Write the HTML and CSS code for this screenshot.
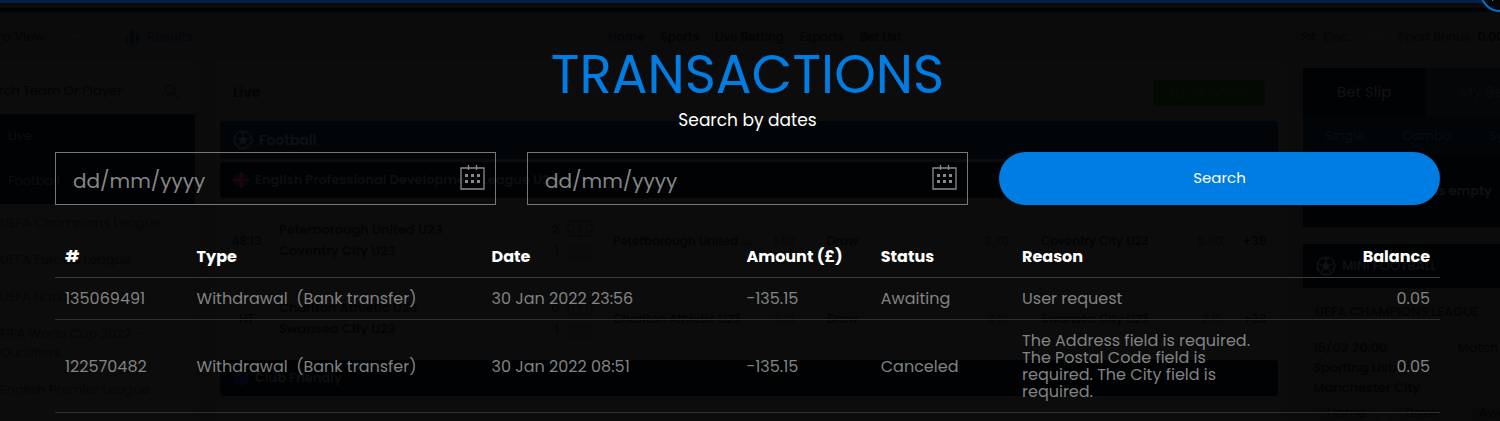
FILE: index.html
```
<!DOCTYPE html>
<html lang="en">
<head>
<meta charset="utf-8">
<meta name="viewport" content="width=device-width, initial-scale=1">
<title>Transactions</title>
<link rel="stylesheet" href="styles.css">
</head>
<body>

<svg class="defs" aria-hidden="true">
  <symbol id="ball" viewBox="0 0 20 20">
    <circle cx="10" cy="10" r="9" fill="none" stroke="currentColor" stroke-width="1.4"/>
    <path d="M10 6l4 3-1.500 4.500h-5L6 9z" fill="currentColor"/>
    <path d="M10 6V2M14 9l4-1.500M12.500 13.500l2.500 3M7.500 13.500l-2.500 3M6 9L2 7.500M7 2l3 1.500L13 2M1 11l2 2-.5 2M19 11l-2 2 .5 2M8 18.500l2-1 2 1" fill="none" stroke="currentColor" stroke-width="1.200"/>
  </symbol>
  <symbol id="calendar" viewBox="0 0 25 25">
    <path d="M1 3h23v21H1z" fill="none" stroke="currentColor" stroke-width="1.300"/>
    <path d="M8.500 0v5M16.500 0v5" stroke="currentColor" stroke-width="1.300"/>
    <path d="M5 9h3v3H5zM11 9h3v3h-3zM17 9h3v3h-3zM5 15h3v3H5zM11 15h3v3h-3zM17 15h3v3h-3z" fill="currentColor"/>
  </symbol>
  <symbol id="pitch" viewBox="0 0 26 41">
    <path d="M1 1h24v15H1zM13 1v15M1 5h5v7H1M25 5h-5v7h5" fill="none" stroke="currentColor"/>
    <circle cx="13" cy="8.500" r="2.500" fill="none" stroke="currentColor"/>
    <path d="M1 26h24v14H1z" fill="#0a0a0a"/>
  </symbol>
</svg>

<div class="page">

  <!-- sportsbook, dimmed behind the dialog -->
  <div class="site" aria-hidden="true">
    <div class="site-top"></div>
    <div class="site-header">
      <div class="header-left">
        <span class="view">Pro View</span>
        <svg class="arrow" width="10" height="7" viewBox="0 0 10 7"><path d="M1 1l4 4 4-4" fill="none" stroke="currentColor" stroke-width="1.500"/></svg>
        <span class="results">
          <svg width="14" height="14" viewBox="0 0 14 14"><path d="M0 6h3v8H0zM5 0h4v14H5zM11 5h3v9h-3z" fill="currentColor"/></svg>
          Results
        </span>
      </div>
      <div class="header-nav">
        <span class="current">Home</span>
        <span>Sports</span>
        <span>Live Betting</span>
        <span>Esports</span>
        <span>Bet List</span>
      </div>
      <div class="header-right">
        <svg width="16" height="12" viewBox="0 0 16 12"><path d="M1 10l5-5 4 4 5-7M1 5l4-3 6 3 4 5" fill="none" stroke="currentColor" stroke-width="1.500"/></svg>
        <span>Dec...</span>
        <svg class="arrow chevron" width="10" height="7" viewBox="0 0 10 7"><path d="M1 1l4 4 4-4" fill="none" stroke="currentColor" stroke-width="1.500"/></svg>
        <span>Sport Bonus</span>
        <b>0.00</b>
      </div>
    </div>

    <div class="site-body">
      <div class="sidebar">
        <div class="team-search">
          <span>Search Team Or Player</span>
          <svg width="15" height="15" viewBox="0 0 15 15"><circle cx="6" cy="6" r="4.500" fill="none" stroke="currentColor" stroke-width="1.500"/><path d="M9 9l5 5" stroke="currentColor" stroke-width="1.500"/></svg>
        </div>
        <div class="side-tabs">
          <span>Live</span>
          <span>Football</span>
        </div>
        <div class="leagues">
          <span>UEFA Champions League</span>
          <span>UEFA Europa League</span>
          <span>UEFA Nations League</span>
          <span>FIFA World Cup 2022 - Qualifiers</span>
          <span>English Premier League</span>
        </div>
      </div>

      <div class="events">
        <div class="events-head"><b>Live</b><span class="all">ALL 63 EVENTS</span></div>
        <div class="sport"><svg width="20" height="20"><use href="#ball"/></svg>Football</div>
        <div class="league">
          <svg width="16" height="16" viewBox="0 0 16 16"><circle cx="8" cy="8" r="8" fill="#05070d"/><path d="M3 3l10 10M13 3L3 13" stroke="#120609"/><path d="M8 0v16M0 8h16" stroke="#200508" stroke-width="2"/></svg>
          English Professional Development League U23
        </div>
        <div class="match">
          <span class="time">48:13</span>
          <span class="teams">Peterborough United U23<br>Coventry City U23</span>
          <span class="score">2<br>1</span>
          <svg width="26" height="41"><use href="#pitch"/></svg>
          <span class="odd"><b>Peterborough United ...</b><i>1.52</i></span>
          <span class="odd"><b>Draw</b><i>3.70</i></span>
          <span class="odd"><b>Coventry City U23</b><i>5.50</i></span>
          <b class="more">+38</b>
        </div>
        <div class="match">
          <span class="time">HT</span>
          <span class="teams">Charlton Athletic U23<br>Swansea City U23</span>
          <span class="score">0<br>1</span>
          <svg width="26" height="41"><use href="#pitch"/></svg>
          <span class="odd"><b>Charlton Athletic U23</b><i>3.10</i></span>
          <span class="odd"><b>Draw</b><i>3.10</i></span>
          <span class="odd"><b>Swansea City U23</b><i>2.15</i></span>
          <b class="more">+38</b>
        </div>
        <div class="league">
          <svg width="16" height="16" viewBox="0 0 16 16"><circle cx="8" cy="8" r="8" fill="#03060f"/></svg>
          Club Friendly
        </div>
      </div>

      <div class="betslip">
        <div class="slip-tabs"><span class="active">Bet Slip</span><span>My Bets</span></div>
        <div class="slip-types"><span>Single</span><span>Combo</span><span>System</span></div>
        <div class="slip-empty">Your bet slip is empty</div>
        <div class="mini-head"><svg width="20" height="20"><use href="#ball"/></svg>MINI FOOTBALL</div>
        <div class="mini-league">UEFA CHAMPIONS LEAGUE</div>
        <div class="mini-match">
          <div class="mini-when"><b>15/02 20:00</b><span>Match Result</span></div>
          <b>Sporting Lisboa vs</b>
          <b>Manchester City</b>
          <div class="mini-odds"><span>Home</span><span>Draw</span><span>Away</span></div>
        </div>
      </div>
    </div>
  </div>

  <main class="dialog">
    <button type="button" class="close" aria-label="Close">
      <svg width="20" height="20" viewBox="0 0 20 20"><path d="M2 2l16 16M18 2L2 18" stroke="currentColor" stroke-width="2"/></svg>
    </button>
    <h1>TRANSACTIONS</h1>
    <p class="subtitle">Search by dates</p>

    <form class="search">
      <div class="date">
        <input type="text" name="from" aria-label="From date" placeholder="dd/mm/yyyy">
        <svg class="icon" width="25" height="25"><use href="#calendar"/></svg>
      </div>
      <div class="date">
        <input type="text" name="to" aria-label="To date" placeholder="dd/mm/yyyy">
        <svg class="icon" width="25" height="25"><use href="#calendar"/></svg>
      </div>
      <button type="submit">Search</button>
    </form>

    <table class="transactions">
      <thead>
        <tr>
          <th class="c-id">#</th>
          <th class="c-type">Type</th>
          <th class="c-date">Date</th>
          <th class="c-amount">Amount (£)</th>
          <th class="c-status">Status</th>
          <th class="c-reason">Reason</th>
          <th class="c-balance">Balance</th>
        </tr>
      </thead>
      <tbody>
        <tr>
          <td>135069491</td>
          <td>Withdrawal &nbsp;(Bank transfer)</td>
          <td>30 Jan 2022 23:56</td>
          <td>-135.15</td>
          <td>Awaiting</td>
          <td>User request</td>
          <td class="c-balance">0.05</td>
        </tr>
        <tr>
          <td>122570482</td>
          <td>Withdrawal &nbsp;(Bank transfer)</td>
          <td>30 Jan 2022 08:51</td>
          <td>-135.15</td>
          <td>Canceled</td>
          <td>The Address field is required. The Postal Code field is required. The City field is required.</td>
          <td class="c-balance">0.05</td>
        </tr>
      </tbody>
    </table>
  </main>

</div>

</body>
</html>
```
FILE: styles.css
```
* { box-sizing: border-box; }
body {
  margin: 0;
  background: #0c0c0c;
  color: #fff;
  font-family: Poppins, Inter, "Open Sans", sans-serif;
  font-size: 16px;
}
.defs { display: none; }
.page {
  position: relative;
  min-height: 100vh;
  overflow: hidden;
  border-bottom: 1px solid #020202;
}

/* dialog */
.dialog {
  position: relative;
  padding: 45px 60px 8px 55px;
}
h1 {
  margin: 0;
  color: #007de3;
  font-size: 53px;
  line-height: 60px;
  font-weight: 400;
  text-align: center;
}
.subtitle {
  margin: 0;
  padding: 3px 0 20px;
  font-size: 17px;
  line-height: 24px;
  text-align: center;
}
.close {
  position: absolute;
  top: -28px;
  right: -20px;
  width: 40px;
  height: 40px;
  padding: 0;
  border: 2px solid #0070cc;
  border-radius: 50%;
  background: #030608;
  color: #fff;
  display: flex;
  align-items: center;
  justify-content: center;
}
.search {
  display: grid;
  grid-template-columns: repeat(3, 1fr);
  gap: 31px;
  margin-bottom: 31px;
}
.date { position: relative; }
.date input {
  display: block;
  width: 100%;
  height: 53px;
  padding: 4px 50px 0 17px;
  border: 1px solid #777;
  border-radius: 0;
  background: transparent;
  color: #999;
  font-family: inherit;
  font-size: 20px;
}
.date input::placeholder { color: #868686; opacity: 1; }
.date .icon {
  position: absolute;
  right: 11px;
  top: 13px;
  color: #8a8a8a;
  pointer-events: none;
}
.search button {
  height: 53px;
  padding: 0 6px 2px;
  border: 0;
  border-radius: 27px;
  background: #007de3;
  color: #fff;
  font-family: inherit;
  font-size: 15px;
}

.transactions {
  width: 100%;
  table-layout: fixed;
  border-collapse: collapse;
  line-height: 17px;
}
.transactions th, .transactions td {
  padding: 12px 10px;
  border-bottom: 1px solid #303030;
  text-align: left;
  vertical-align: middle;
}
.transactions th { font-weight: 700; border-bottom-color: #3c3c3c; }
.transactions td { color: #828282; }
.c-id { width: 9.5%; }
.c-type { width: 21.3%; }
.c-date { width: 18.4%; }
.c-amount { width: 9.7%; white-space: nowrap; }
.c-status { width: 10.2%; }
.c-reason { width: 19%; }
.transactions .c-balance { text-align: right; }

/* dimmed sportsbook */
.site {
  position: absolute;
  inset: 0 -40px;
  overflow: hidden;
  background: #0b0b0b;
  color: #030303;
  font-size: 13px;
}
.site-top {
  height: 12px;
  border-top: 3px solid #00214a;
  border-bottom: 4px solid #010406;
}
.site-header {
  display: grid;
  grid-template-columns: 1fr auto 1fr;
  align-items: center;
  height: 48px;
  padding: 2px 20px 0 30px;
  font-size: 12px;
}
.header-left, .header-nav, .header-right, .results {
  display: flex;
  align-items: center;
}
.header-left { gap: 26px; }
.view { font-size: 13px; }
.arrow { color: #0f0f0f; }
.results { gap: 8px; margin-left: 18px; color: #02060d; font-size: 13px; }
.header-nav { gap: 16px; font-weight: 500; }
.current { color: #01050b; }
.header-right { justify-content: flex-end; gap: 8px; padding-right: 16px; color: #040506; }
.header-right b { color: #020202; font-weight: 500; }
.chevron { margin: 0 9px; }
.site-body {
  display: grid;
  grid-template-columns: 235px 1fr 237px;
  gap: 20px;
}
.sidebar, .events { background: #0c0c0c; }
.team-search {
  display: flex;
  align-items: center;
  justify-content: space-between;
  height: 54px;
  padding: 8px 16px 0 14px;
}
.team-search svg { color: #03070b; }
.side-tabs span {
  display: block;
  height: 45px;
  padding-left: 48px;
  background: #010204;
  color: #0d0f10;
  line-height: 43px;
}
.leagues {
  display: flex;
  flex-direction: column;
  gap: 18px;
  padding: 9px 20px 9px 40px;
  color: #04060a;
  line-height: 19px;
}
.events { padding: 0 5px; }
.events-head {
  display: flex;
  align-items: center;
  justify-content: space-between;
  height: 61px;
  padding: 4px 13px 0;
  font-size: 14px;
}
.events-head b { font-weight: 600; }
.all {
  padding: 0 15px;
  border-radius: 4px;
  background: #030a01;
  color: #080d07;
  font-size: 12px;
  line-height: 26px;
}
.sport, .league {
  display: flex;
  align-items: center;
  gap: 6px;
  height: 38px;
  padding-left: 13px;
  border-radius: 4px;
  background: #010508;
  color: #0e1214;
  font-size: 14px;
  font-weight: 600;
}
.league {
  height: 36px;
  margin: 3px 0;
  background: #010204;
  color: #0e0f10;
  font-size: 13px;
}
.match {
  display: grid;
  grid-template-columns: 41px 262px 10px 26px 1fr 1fr 1fr 26px;
  align-items: center;
  gap: 8px;
  height: 78px;
  padding: 0 9px 0 10px;
  line-height: 21px;
  font-weight: 500;
}
.time { padding-right: 8px; text-align: center; font-size: 12px; }
.score { color: #030609; text-align: right; }
.match svg { color: #070707; }
.odd {
  display: flex;
  justify-content: space-between;
  padding: 0 12px;
  font-size: 12px;
}
.odd b, .more { font-weight: 500; }
.more { font-size: 12px; }
.odd i { font-style: normal; color: #04080b; }
.slip-tabs, .slip-types { display: flex; align-items: center; }
.slip-tabs {
  margin-top: 8px;
  background: #050607;
  color: #0c0c0c;
  font-size: 15px;
  line-height: 48px;
}
.slip-tabs span { padding-left: 34px; }
.slip-tabs .active {
  width: 123px;
  background: #010203;
  color: #131313;
}
.slip-types {
  gap: 38px;
  padding: 0 22px;
  background: #010508;
  color: #0b0e10;
  line-height: 39px;
}
.slip-empty {
  padding: 0 47px;
  background: #010203;
  color: #111;
  font-weight: 600;
  line-height: 72px;
  white-space: nowrap;
}
.mini-head {
  display: flex;
  align-items: center;
  gap: 6px;
  height: 44px;
  margin-top: 17px;
  padding-left: 13px;
  background: #010204;
  color: #101214;
  font-weight: 500;
}
.mini-league {
  padding: 4px 0 0 12px;
  border-bottom: 1px solid #090909;
  line-height: 40px;
  font-weight: 500;
}
.mini-match {
  display: flex;
  flex-direction: column;
  padding: 5px 10px;
  line-height: 20px;
}
.mini-match b { font-weight: 500; }
.mini-when {
  display: flex;
  gap: 70px;
  white-space: nowrap;
}
.mini-odds {
  display: grid;
  grid-template-columns: repeat(3, 1fr);
  gap: 8px;
  margin-top: 5px;
  text-align: center;
}
.mini-odds span { background: #0a0a0a; }
```
